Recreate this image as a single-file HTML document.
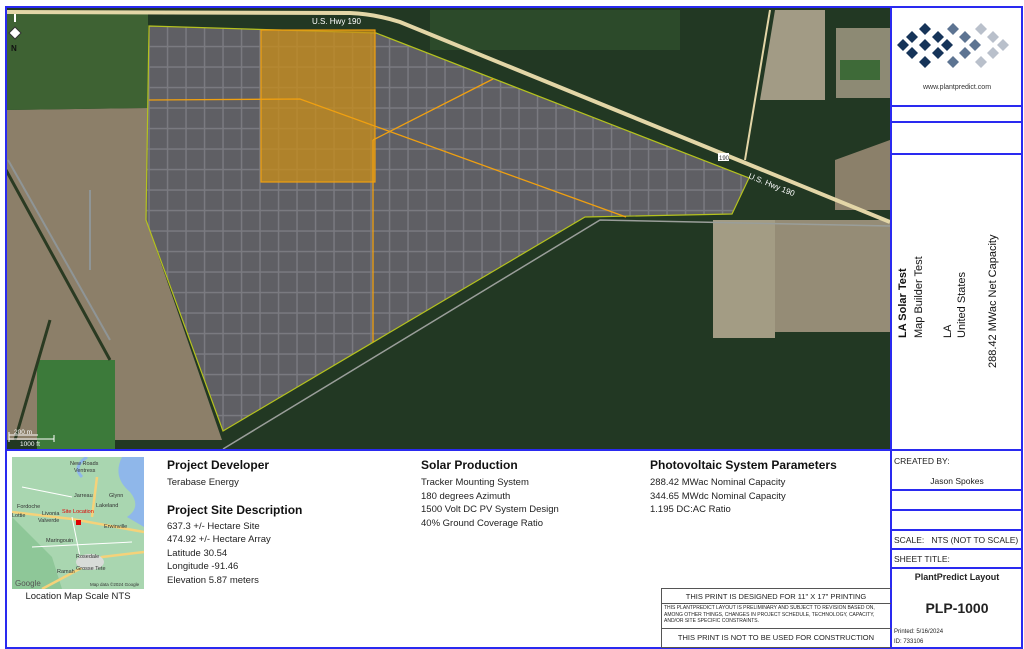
<!DOCTYPE html>
<html><head><meta charset="utf-8"><style>
*{margin:0;padding:0;box-sizing:border-box}
body{width:1024px;height:649px;background:#fff;position:relative;overflow:hidden;font-family:"Liberation Sans",Arial,sans-serif;color:#222}
.a{position:absolute}
.bl{border:2px solid #2a2af0}
.vt{position:absolute;writing-mode:vertical-rl;transform:rotate(180deg);font-size:11px;color:#111;white-space:nowrap}
h3{font-size:12px;font-weight:bold;color:#111}
.t{font-size:9.5px;line-height:13.5px;color:#222}
</style></head><body>
<!-- map -->
<svg class="a" style="left:6px;top:7px" width="886" height="443" viewBox="6 7 886 443">
<defs>
<pattern id="g" x="149" y="26" width="18.5" height="20.5" patternUnits="userSpaceOnUse">
<rect width="18.5" height="20.5" fill="#7a7a80"/>
<rect x="0.8" y="0.8" width="17" height="19" fill="#5f5f64"/>
</pattern>
</defs>
<rect x="6" y="7" width="886" height="443" fill="#223823"/>
<!-- left fields -->
<polygon points="6,110 148,108 146,220 222,440 6,440" fill="#8c7f69"/>
<polygon points="6,12 148,12 148,108 6,110" fill="#3e6233"/>
<rect x="37" y="360" width="78" height="90" fill="#3c7a3a"/>
<path d="M6,170 L110,360 M50,320 L15,440" stroke="#2a3a22" stroke-width="3" fill="none"/>
<path d="M8,160 L110,340 M90,190 L90,270" stroke="#8f9596" stroke-width="2" fill="none"/>
<!-- right fields -->
<rect x="713" y="220" width="62" height="118" fill="#a39c84"/>
<rect x="775" y="220" width="115" height="112" fill="#958c76"/>
<polygon points="775,10 825,10 825,100 760,100" fill="#a29b85"/>
<rect x="836" y="28" width="54" height="70" fill="#8d8a74"/>
<rect x="840" y="60" width="40" height="20" fill="#3e6a38"/>
<polygon points="835,160 890,140 890,210 835,210" fill="#8b806a"/>
<rect x="430" y="10" width="250" height="40" fill="#2c4a2a"/>
<!-- roads -->
<path d="M7,12 L350,13 Q375,14 400,22 L890,222" stroke="#e3d6a7" stroke-width="4" fill="none"/>
<path d="M770,10 L745,160" stroke="#e3d6a7" stroke-width="2" fill="none"/>
<path d="M223,449 L600,220 L890,226" stroke="#9a9e9a" stroke-width="1.5" fill="none"/>
<!-- array -->
<polygon points="149,26 376,33 749,178 732,214 585,217 223,431 146,220" fill="url(#g)"/>
<polygon points="149,26 376,33 749,178 732,214 585,217 223,431 146,220" fill="none" stroke="#b5c21e" stroke-width="1.2"/>
<rect x="261" y="30" width="114" height="152" fill="#c98d18" fill-opacity="0.75" stroke="#f0a010" stroke-width="1.2"/>
<path d="M149,100 L300,99 L626,217 M373,140 L493,79 M373,140 L373,342" stroke="#f0a010" stroke-width="1.3" fill="none"/>
<!-- labels -->
<text x="312" y="24" font-size="8" fill="#fff" font-family="Liberation Sans">U.S. Hwy 190</text>
<text x="748" y="178" font-size="8" fill="#fff" font-family="Liberation Sans" transform="rotate(22 748 178)">U.S. Hwy 190</text>
<rect x="718" y="153" width="11" height="8" fill="#fff"/><text x="719" y="160" font-size="6" fill="#333">190</text>
<!-- north -->
<path d="M15,14 L15,22" stroke="#fff" stroke-width="2"/>
<polygon points="15,27 21,33 15,39 9,33" fill="#fff" stroke="#333"/>
<text x="11" y="51" font-size="8" font-weight="bold" fill="#111">N</text>
<!-- scale -->
<path d="M9,435 L38,435 M9,439 L54,439 M9,432 L9,442 M54,435 L54,442" stroke="#fff" stroke-width="1"/>
<text x="14" y="434" font-size="6.5" fill="#fff">200 m</text>
<text x="20" y="446" font-size="6.5" fill="#fff">1000 ft</text>
</svg>
<!-- outer frame -->
<div class="a" style="left:5px;top:6px;width:1018px;height:643px;border:2px solid #2a2af0"></div>
<div class="a" style="left:6px;top:449px;width:1016px;height:2px;background:#2a2af0"></div>
<!-- right panel -->
<div class="a" style="left:890px;top:6px;width:2px;height:643px;background:#2a2af0"></div>
<div class="a" style="left:891px;top:105px;width:131px;height:2px;background:#2a2af0"></div>
<div class="a" style="left:891px;top:121px;width:131px;height:2px;background:#2a2af0"></div>
<div class="a" style="left:891px;top:153px;width:131px;height:2px;background:#2a2af0"></div>
<svg class="a" style="left:892px;top:20px" width="130" height="55" viewBox="892 20 130 55">
<g fill="#163459">
<polygon points="925,23 931,29 925,35 919,29"/><polygon points="912,31 918,37 912,43 906,37"/><polygon points="938,31 944,37 938,43 932,37"/>
<polygon points="903,39 909,45 903,51 897,45"/><polygon points="925,39 931,45 925,51 919,45"/><polygon points="947,39 953,45 947,51 941,45"/>
<polygon points="912,47 918,53 912,59 906,53"/><polygon points="938,47 944,53 938,59 932,53"/><polygon points="925,56 931,62 925,68 919,62"/>
</g>
<g fill="#5d7492">
<polygon points="953,23 959,29 953,35 947,29"/><polygon points="965,31 971,37 965,43 959,37"/><polygon points="975,39 981,45 975,51 969,45"/>
<polygon points="965,47 971,53 965,59 959,53"/><polygon points="953,56 959,62 953,68 947,62"/>
</g>
<g fill="#b9c0cb">
<polygon points="981,23 987,29 981,35 975,29"/><polygon points="993,31 999,37 993,43 987,37"/><polygon points="1003,39 1009,45 1003,51 997,45"/>
<polygon points="993,47 999,53 993,59 987,53"/><polygon points="981,56 987,62 981,68 975,62"/>
</g>
</svg>
<div class="a" style="left:892px;top:84px;width:130px;text-align:center;font-size:7px;color:#333">www.plantpredict.com</div>
<div class="vt" style="left:897px;top:260px;height:78px;font-weight:bold">LA Solar Test</div>
<div class="vt" style="left:913px;top:258px;height:80px">Map Builder Test</div>
<div class="vt" style="left:942px;top:290px;height:48px">LA</div>
<div class="vt" style="left:956px;top:268px;height:70px">United States</div>
<div class="vt" style="left:987px;top:230px;height:138px">288.42 MWac Net Capacity</div>
<!-- bottom right table -->
<div class="a" style="left:891px;top:489px;width:131px;height:2px;background:#2a2af0"></div>
<div class="a" style="left:891px;top:509px;width:131px;height:2px;background:#2a2af0"></div>
<div class="a" style="left:891px;top:529px;width:131px;height:2px;background:#2a2af0"></div>
<div class="a" style="left:891px;top:548px;width:131px;height:2px;background:#2a2af0"></div>
<div class="a" style="left:891px;top:567px;width:131px;height:2px;background:#2a2af0"></div>
<div class="a" style="left:894px;top:456px;font-size:8.5px">CREATED BY:</div>
<div class="a" style="left:892px;top:476px;width:130px;text-align:center;font-size:8.5px">Jason Spokes</div>
<div class="a" style="left:894px;top:535px;font-size:8.5px">SCALE:&nbsp;&nbsp; NTS (NOT TO SCALE)</div>
<div class="a" style="left:894px;top:554px;font-size:8.5px">SHEET TITLE:</div>
<div class="a" style="left:892px;top:572px;width:130px;text-align:center;font-size:9px;font-weight:bold">PlantPredict Layout</div>
<div class="a" style="left:892px;top:600px;width:130px;text-align:center;font-size:14px;font-weight:bold">PLP-1000</div>
<div class="a" style="left:894px;top:629px;font-size:6px">Printed: 5/16/2024</div>
<div class="a" style="left:894px;top:639px;font-size:6px">ID: 733106</div>
<!-- disclaimer box -->
<div class="a" style="left:661px;top:588px;width:230px;height:60px;border:1px solid #555;border-right:none"></div>
<div class="a" style="left:661px;top:603px;width:230px;height:1px;background:#555"></div>
<div class="a" style="left:661px;top:628px;width:230px;height:1px;background:#555"></div>
<div class="a" style="left:661px;top:592px;width:230px;text-align:center;font-size:7.5px">THIS PRINT IS DESIGNED FOR 11" X 17" PRINTING</div>
<div class="a" style="left:664px;top:605px;width:225px;font-size:5px;line-height:6.5px">THIS PLANTPREDICT LAYOUT IS PRELIMINARY AND SUBJECT TO REVISION BASED ON, AMONG OTHER THINGS, CHANGES IN PROJECT SCHEDULE, TECHNOLOGY, CAPACITY, AND/OR SITE SPECIFIC CONSTRAINTS.</div>
<div class="a" style="left:661px;top:633px;width:230px;text-align:center;font-size:7.5px">THIS PRINT IS NOT TO BE USED FOR CONSTRUCTION</div>
<!-- location map -->
<svg class="a" style="left:12px;top:457px" width="132" height="132" viewBox="0 0 132 132">
<rect width="132" height="132" fill="#a9d6b0"/>
<path d="M0,60 L40,100 L50,132 L0,132Z" fill="#8ec798"/>
<path d="M110,0 Q100,20 118,35 Q130,50 115,60 L132,70 L132,0Z" fill="#8fb7ea"/>
<path d="M75,0 Q60,10 70,20" stroke="#8fb7ea" stroke-width="3" fill="none"/>
<path d="M0,55 L60,62 L132,75 M30,132 L90,100 L132,95 M85,20 L80,60" stroke="#f5d27a" stroke-width="2.5" fill="none"/>
<path d="M10,30 L60,40 M60,60 L70,110 M20,90 L120,85" stroke="#fff" stroke-width="1" fill="none"/>
<ellipse cx="78" cy="105" rx="14" ry="8" fill="#d8dcd8"/>
<rect x="64" y="63" width="5" height="5" fill="#d00"/>
<g font-family="Liberation Sans" font-size="5.5" fill="#333">
<text x="58" y="8">New Roads</text><text x="62" y="15">Ventress</text><text x="62" y="40">Jarreau</text><text x="97" y="40">Glynn</text><text x="84" y="50">Lakeland</text><text x="5" y="51">Fordoche</text><text x="0" y="60">Lottie</text><text x="30" y="58">Livonia</text><text x="26" y="65">Valverde</text><text x="92" y="71">Erwinville</text><text x="34" y="85">Maringouin</text><text x="64" y="101">Rosedale</text><text x="45" y="116">Ramah</text><text x="64" y="113">Grosse Tete</text><text x="78" y="129" font-size="4.5">Map data ©2024 Google</text>
</g>
<text x="50" y="56" font-size="5.5" fill="#d00" font-family="Liberation Sans">Site Location</text>
<text x="3" y="129" font-size="8" fill="#555" font-family="Liberation Sans">Google</text>
</svg>
<div class="a" style="left:12px;top:591px;width:132px;text-align:center;font-size:9.5px">Location Map Scale NTS</div>
<!-- text columns -->
<div class="a" style="left:167px;top:458px"><h3>Project Developer</h3><div class="t" style="margin-top:4px">Terabase Energy</div>
<h3 style="margin-top:13px">Project Site Description</h3><div class="t" style="margin-top:3px">637.3 +/- Hectare Site<br>474.92 +/- Hectare Array<br>Latitude 30.54<br>Longitude -91.46<br>Elevation 5.87 meters</div></div>
<div class="a" style="left:421px;top:458px"><h3>Solar Production</h3><div class="t" style="margin-top:4px">Tracker Mounting System<br>180 degrees Azimuth<br>1500 Volt DC PV System Design<br>40% Ground Coverage Ratio</div></div>
<div class="a" style="left:650px;top:458px"><h3>Photovoltaic System Parameters</h3><div class="t" style="margin-top:4px">288.42 MWac Nominal Capacity<br>344.65 MWdc Nominal Capacity<br>1.195 DC:AC Ratio</div></div>
</body></html>
